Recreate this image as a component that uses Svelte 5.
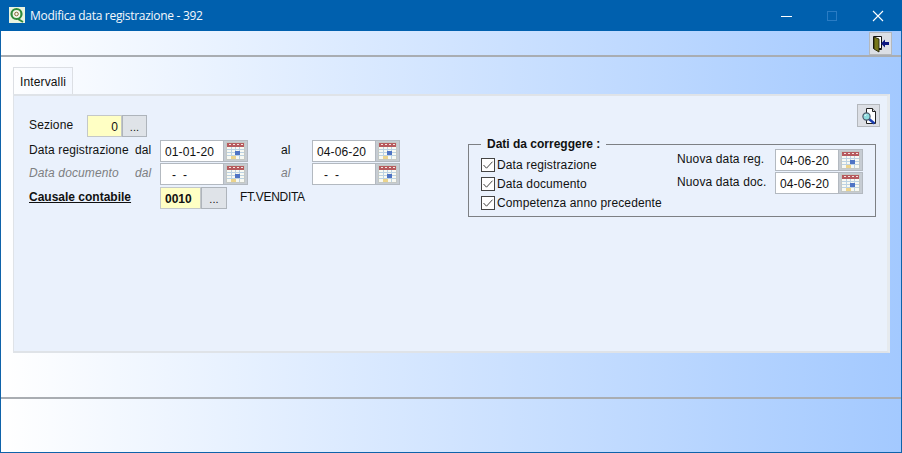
<script>
  const checks = ['Data registrazione', 'Data documento', 'Competenza anno precedente'];
  const newDates = [
    { label: 'Nuova data reg.', value: '04-06-20' },
    { label: 'Nuova data doc.', value: '04-06-20' }
  ];
  const emptyDate = '\u00a0\u00a0-\u00a0\u00a0-';
</script>

{#snippet calendar()}
  <span class="cal">
    <svg width="19" height="18" viewBox="0 0 19 18">
      <rect x="0.5" y="0.5" width="18" height="17" fill="#f8f9f2" stroke="#c4c8c4" />
      <rect x="1" y="1" width="17" height="4" fill="#b65a5e" />
      <path d="M3 2.5h2M7 2.5h2M11 2.5h2M15 2.5h2" stroke="#f4e6e2" />
      <path d="M1 7.5h17M1 10.5h17M1 13.5h17M5.5 5v12M9.5 5v12M13.5 5v12" stroke="#bcd2e2" />
      <rect x="9" y="9" width="5" height="4" fill="#4f74c4" />
      <rect x="5" y="14" width="5" height="3" fill="#ecd48c" />
    </svg>
  </span>
{/snippet}

{#snippet dateField(value)}
  <span class="date">
    <span class="input">{value}</span>
    {@render calendar()}
  </span>
{/snippet}

<div class="window">
  <header class="titlebar">
    <svg class="appicon" width="16" height="16" viewBox="0 0 16 16">
      <rect width="16" height="16" fill="#e9f3df" />
      <circle cx="7.5" cy="7" r="5" fill="#f4f8ec" stroke="#2f8a3a" stroke-width="2.2" />
      <circle cx="7.5" cy="7" r="1.8" fill="none" stroke="#8a6a3a" stroke-width="1" />
      <path d="M9 12l5 3" stroke="#2f8a3a" stroke-width="2" />
    </svg>
    <span class="title">Modifica data registrazione - 392</span>
    <div class="controls">
      <svg width="12" height="12" viewBox="0 0 12 12"><path d="M1 6.5h11" stroke="#fff" /></svg>
      <svg width="12" height="12" viewBox="0 0 12 12"><rect x="1.5" y="1.5" width="9" height="9" fill="none" stroke="#2a7cc4" /></svg>
      <svg width="12" height="12" viewBox="0 0 12 12"><path d="M1 1l10 10M11 1L1 11" stroke="#fff" stroke-width="1.1" /></svg>
    </div>
  </header>

  <div class="toolbar">
    <button class="iconbtn" aria-label="Esci">
      <svg width="18" height="18" viewBox="0 0 18 18">
        <path d="M1.5 1.5h8v12h-8z" fill="#fff" stroke="#111" />
        <path d="M2 2l5 2v13l-5-3z" fill="#77771a" stroke="#22220a" stroke-width="0.9" />
        <path d="M9.5 13.5v1H7" stroke="#111" fill="none" />
        <path d="M12 7h5v3h-5zM13 4.5v8L9 8.5z" fill="#0c1680" />
      </svg>
    </button>
  </div>

  <main class="content">
    <div class="tabs"><span class="tab">Intervalli</span></div>
    <section class="panel">
      <div class="form">
        <div class="row first">
          <span class="label sezione">Sezione</span>
          <span class="input yellow num">0</span>
          <span class="dots">...</span>
        </div>
        <div class="row second">
          <span class="label wide">Data registrazione</span>
          <span class="dal">dal</span>
          {@render dateField('01-01-20')}
          <span class="al">al</span>
          {@render dateField('04-06-20')}
        </div>
        <div class="row off">
          <span class="label wide">Data documento</span>
          <span class="dal">dal</span>
          {@render dateField(emptyDate)}
          <span class="al">al</span>
          {@render dateField(emptyDate)}
        </div>
        <div class="row last">
          <span class="label link">Causale contabile</span>
          <span class="input yellow code">0010</span>
          <span class="dots">...</span>
          <span class="desc">FT.VENDITA</span>
        </div>
      </div>

      <div class="side">
        <button class="iconbtn preview" aria-label="Anteprima">
          <svg width="18" height="18" viewBox="0 0 18 18">
            <path d="M6.5 1.5h6l3 3v12h-9z" fill="#fff" stroke="#222" />
            <path d="M12.5 1.5v3h3" fill="#ddd" stroke="#222" />
            <path d="M9 12l5.5 4.5" stroke="#1c3fb0" stroke-width="2.4" />
            <circle cx="6.5" cy="9.5" r="3.6" fill="#8fdde0" stroke="#4a5a6a" stroke-width="1.2" />
            <path d="M4.8 9a2 2 0 0 1 1.6-1.4" stroke="#fff" fill="none" />
          </svg>
        </button>
        <fieldset class="group">
          <legend>Dati da correggere :</legend>
          <div class="checks">
            {#each checks as text}
              <label class="check">
                <span class="box">
                  <svg width="14" height="14" viewBox="0 0 14 14">
                    <path d="M2.5 7l3 3.2 6-6.5" fill="none" stroke="#444" stroke-width="1" />
                  </svg>
                </span>
                {text}
              </label>
            {/each}
          </div>
          <div class="newdates">
            {#each newDates as item}
              <div class="newrow">
                <span class="newlabel">{item.label}</span>
                {@render dateField(item.value)}
              </div>
            {/each}
          </div>
        </fieldset>
      </div>
    </section>
  </main>

  <footer class="statusbar"></footer>
</div>

<style>
  :global(body) {
    margin: 0;
    font-family: "Liberation Sans", Arial, sans-serif;
    font-size: 12px;
    letter-spacing: 0.13px;
    color: #111;
  }

  .window {
    box-sizing: border-box;
    width: 902px;
    height: 453px;
    display: flex;
    flex-direction: column;
    border: 1px solid #0f63aa;
    border-top: 0;
    background: linear-gradient(90deg, #ffffff 0%, #a3c9ff 100%);
  }

  .titlebar {
    height: 31px;
    margin: 0 -1px;
    flex: none;
    background: #0060ae;
    display: flex;
    align-items: center;
    padding-left: 9px;
    color: #f4f8fc;
  }

  .appicon {
    margin-right: 5px;
    margin-top: -2px;
  }

  .title {
    font-family: "Open Sans", sans-serif;
    font-size: 12px;
    letter-spacing: -0.3px;
  }

  .controls {
    margin-left: auto;
    display: flex;
    gap: 34px;
    padding-right: 18px;
  }

  .toolbar {
    height: 26px;
    flex: none;
    box-sizing: border-box;
    border-bottom: 2px solid #a9adb2;
    display: flex;
    justify-content: flex-end;
    padding: 1px 9px 0 0;
  }

  .iconbtn {
    width: 23px;
    height: 23px;
    padding: 0;
    border: 1px solid #b4b8bd;
    background: #dcdfe5;
    display: flex;
    align-items: center;
    justify-content: center;
  }

  .content {
    flex: 1;
    padding: 10px 11px 0 12px;
    display: flex;
    flex-direction: column;
  }

  .tabs {
    display: flex;
    height: 28px;
    flex: none;
    margin-bottom: -1px;
  }

  .tab {
    width: 60px;
    box-sizing: border-box;
    border: 1px solid #dcdfe4;
    border-bottom: 0;
    padding: 7px 0 0 6px;
    background: linear-gradient(90deg, #fdfeff, #f4f8ff);
  }

  .panel {
    height: 259px;
    box-sizing: border-box;
    border: 2px solid #dfe3e8;
    border-left-width: 1px;
    border-right: 3px solid #e6eaee;
    background: #eaf1fc;
    display: flex;
    justify-content: space-between;
  }

  .form {
    padding: 19px 0 0 15px;
  }

  .row {
    display: flex;
    align-items: center;
    height: 22px;
    white-space: nowrap;
  }

  .second { margin-top: 3px; }
  .off { margin-top: 1px; color: #7d7f82; font-style: italic; }
  .last { margin-top: 2px; }

  .label { margin-top: -2px; }
  .dal, .al { margin-top: -2px; }

  .label.sezione { width: 58px; margin-top: -3px; }
  .label.wide { width: 106px; }
  .label.link {
    width: 131px;
    font-weight: bold;
    text-decoration: underline;
    letter-spacing: 0;
  }

  .dal { width: 25px; }
  .al { width: 31px; margin-left: 33px; }

  .date {
    display: flex;
    height: 22px;
  }

  .input {
    box-sizing: border-box;
    height: 22px;
    border: 1px solid #b3b9c0;
    background: #fff;
    display: flex;
    align-items: center;
    font-style: normal;
    width: 64px;
    padding: 2px 0 0 4px;
    color: #111;
  }

  .yellow { background: #ffffc4; border-color: #c4c8c8; }
  .num { width: 35px; justify-content: flex-end; padding-right: 3px; }
  .code { width: 41px; font-weight: bold; padding-left: 4px; letter-spacing: 0; }

  .dots {
    box-sizing: border-box;
    width: 25px;
    height: 22px;
    border: 1px solid #aeb4bb;
    background: #dfe3e8;
    text-align: center;
    line-height: 22px;
    font-size: 11px;
  }

  .code + .dots { width: 26px; }

  .desc { margin-left: 13px; margin-top: -2px; letter-spacing: -0.3px; }

  .cal {
    box-sizing: border-box;
    width: 24px;
    height: 22px;
    background: #c6ccd3;
    border: 1px solid #b3b9c0;
    border-left: 0;
    display: flex;
    align-items: center;
    justify-content: center;
  }

  .side {
    display: flex;
    flex-direction: column;
    align-items: flex-end;
    padding: 8px 0 0 0;
  }

  .preview {
    margin-right: 7px;
  }

  .group {
    box-sizing: border-box;
    width: 408px;
    height: 80px;
    margin: 10px 11px 0 0;
    padding: 0 12px;
    border: 1px solid #7d8084;
    display: flex;
    justify-content: space-between;
  }

  legend {
    font-weight: bold;
    letter-spacing: 0;
    padding: 0 6px;
  }

  .checks {
    display: flex;
    flex-direction: column;
    gap: 5px;
    padding-top: 7px;
  }

  .check {
    display: flex;
    align-items: center;
    gap: 2px;
    height: 14px;
  }

  .box {
    box-sizing: border-box;
    width: 14px;
    height: 14px;
    border: 1px solid #444;
    background: #fff;
    display: flex;
  }

  .box svg { margin: -1px; }

  .newdates {
    display: flex;
    flex-direction: column;
    gap: 1px;
    margin-top: -2px;
  }

  .newrow {
    display: flex;
    align-items: center;
    height: 22px;
  }

  .newlabel {
    width: 98px;
    margin-top: -3px;
  }

  .statusbar {
    height: 55px;
    flex: none;
    box-sizing: border-box;
    border-top: 2px solid #a9adb2;
  }
</style>
